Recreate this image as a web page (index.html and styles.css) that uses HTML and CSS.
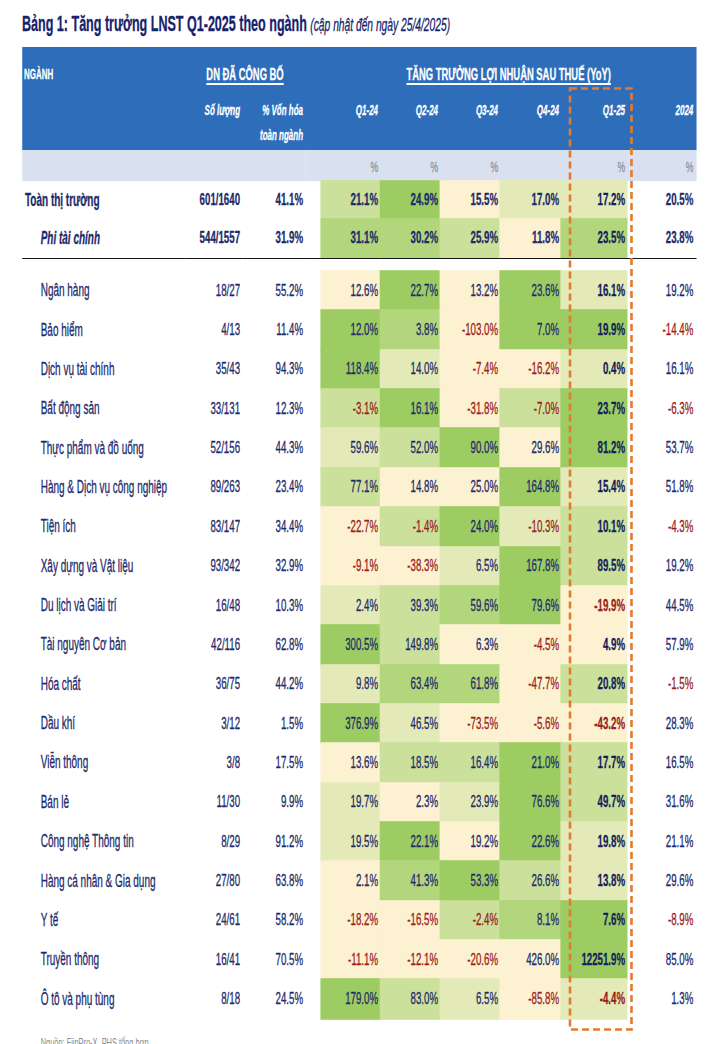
FILE: index.html
```html
<!DOCTYPE html>
<html lang="vi">
<head>
<meta charset="utf-8">
<title>Bảng 1: Tăng trưởng LNST Q1-2025 theo ngành</title>
<link rel="stylesheet" href="styles.css">
</head>
<body>
<div class="page">
  <div class="sheet">
    <h1 class="title">Bảng 1: Tăng trưởng LNST Q1-2025 theo ngành <span class="note">(cập nhật đến ngày 25/4/2025)</span></h1>
    <table class="growth">
      <colgroup>
        <col class="c-sector"><col class="c-count"><col class="c-cap"><col class="c-spacer">
        <col class="c-q"><col class="c-q2"><col class="c-q2"><col class="c-q4"><col class="c-q125"><col class="c-year">
      </colgroup>
      <thead>
        <tr class="r1">
          <th class="sector">NGÀNH</th>
          <th colspan="2" class="group"><span>DN ĐÃ CÔNG BỐ</span></th>
          <th></th>
          <th colspan="6" class="group"><span>TĂNG TRƯỞNG LỢI NHUẬN SAU THUẾ (YoY)</span></th>
        </tr>
        <tr class="r2">
          <th></th>
          <th>Số lượng</th>
          <th>% Vốn hóa<br>toàn ngành</th>
          <th></th>
          <th>Q1-24</th><th>Q2-24</th><th>Q3-24</th><th>Q4-24</th><th>Q1-25</th><th class="yr">2024</th>
        </tr>
        <tr class="r3">
          <th></th><th></th><th class="sep"></th><th></th>
          <th>%</th><th>%</th><th>%</th><th></th><th>%</th><th class="yr">%</th>
        </tr>
      </thead>
      <tbody>
        <tr class="total">
          <td class="label">Toàn thị trường</td><td class="num">601/1640</td><td class="num">41.1%</td><td></td>
          <td class="num g3">21.1%</td><td class="num g5">24.9%</td><td class="num g1">15.5%</td><td class="num g2">17.0%</td><td class="num q g2">17.2%</td><td class="num yr">20.5%</td>
        </tr>
        <tr class="nonfin">
          <td class="label">Phi tài chính</td><td class="num">544/1557</td><td class="num">31.9%</td><td></td>
          <td class="num g4">31.1%</td><td class="num g4">30.2%</td><td class="num g3">25.9%</td><td class="num g1">11.8%</td><td class="num q g4">23.5%</td><td class="num yr">23.8%</td>
        </tr>
        <tr class="gap"><td colspan="10"></td></tr>
        <tr class="row">
          <td class="label">Ngân hàng</td><td class="num">18/27</td><td class="num">55.2%</td><td></td>
          <td class="num g1">12.6%</td><td class="num g5">22.7%</td><td class="num g1">13.2%</td><td class="num g5">23.6%</td><td class="num q g2">16.1%</td><td class="num yr">19.2%</td>
        </tr>
        <tr class="row">
          <td class="label">Bảo hiểm</td><td class="num">4/13</td><td class="num">11.4%</td><td></td>
          <td class="num g5">12.0%</td><td class="num g4">3.8%</td><td class="num g1 neg">-103.0%</td><td class="num g5">7.0%</td><td class="num q g5">19.9%</td><td class="num yr neg">-14.4%</td>
        </tr>
        <tr class="row">
          <td class="label">Dịch vụ tài chính</td><td class="num">35/43</td><td class="num">94.3%</td><td></td>
          <td class="num g5">118.4%</td><td class="num g2">14.0%</td><td class="num g1 neg">-7.4%</td><td class="num g1 neg">-16.2%</td><td class="num q g2">0.4%</td><td class="num yr">16.1%</td>
        </tr>
        <tr class="row">
          <td class="label">Bất động sản</td><td class="num">33/131</td><td class="num">12.3%</td><td></td>
          <td class="num g3 neg">-3.1%</td><td class="num g5">16.1%</td><td class="num g1 neg">-31.8%</td><td class="num g3 neg">-7.0%</td><td class="num q g5">23.7%</td><td class="num yr neg">-6.3%</td>
        </tr>
        <tr class="row">
          <td class="label">Thực phẩm và đồ uống</td><td class="num">52/156</td><td class="num">44.3%</td><td></td>
          <td class="num g2">59.6%</td><td class="num g3">52.0%</td><td class="num g5">90.0%</td><td class="num g1">29.6%</td><td class="num q g5">81.2%</td><td class="num yr">53.7%</td>
        </tr>
        <tr class="row">
          <td class="label">Hàng &amp; Dịch vụ công nghiệp</td><td class="num">89/263</td><td class="num">23.4%</td><td></td>
          <td class="num g3">77.1%</td><td class="num g1">14.8%</td><td class="num g1">25.0%</td><td class="num g5">164.8%</td><td class="num q g2">15.4%</td><td class="num yr">51.8%</td>
        </tr>
        <tr class="row">
          <td class="label">Tiện ích</td><td class="num">83/147</td><td class="num">34.4%</td><td></td>
          <td class="num g1 neg">-22.7%</td><td class="num g3 neg">-1.4%</td><td class="num g5">24.0%</td><td class="num g2 neg">-10.3%</td><td class="num q g3">10.1%</td><td class="num yr neg">-4.3%</td>
        </tr>
        <tr class="row">
          <td class="label">Xây dựng và Vật liệu</td><td class="num">93/342</td><td class="num">32.9%</td><td></td>
          <td class="num g1 neg">-9.1%</td><td class="num g1 neg">-38.3%</td><td class="num g2">6.5%</td><td class="num g5">167.8%</td><td class="num q g3">89.5%</td><td class="num yr">19.2%</td>
        </tr>
        <tr class="row">
          <td class="label">Du lịch và Giải trí</td><td class="num">16/48</td><td class="num">10.3%</td><td></td>
          <td class="num g2">2.4%</td><td class="num g3">39.3%</td><td class="num g4">59.6%</td><td class="num g5">79.6%</td><td class="num q g1 neg">-19.9%</td><td class="num yr">44.5%</td>
        </tr>
        <tr class="row">
          <td class="label">Tài nguyên Cơ bản</td><td class="num">42/116</td><td class="num">62.8%</td><td></td>
          <td class="num g5">300.5%</td><td class="num g3">149.8%</td><td class="num g1">6.3%</td><td class="num g1 neg">-4.5%</td><td class="num q g1">4.9%</td><td class="num yr">57.9%</td>
        </tr>
        <tr class="row">
          <td class="label">Hóa chất</td><td class="num">36/75</td><td class="num">44.2%</td><td></td>
          <td class="num g2">9.8%</td><td class="num g4">63.4%</td><td class="num g4">61.8%</td><td class="num g1 neg">-47.7%</td><td class="num q g3">20.8%</td><td class="num yr neg">-1.5%</td>
        </tr>
        <tr class="row">
          <td class="label">Dầu khí</td><td class="num">3/12</td><td class="num">1.5%</td><td></td>
          <td class="num g5">376.9%</td><td class="num g2">46.5%</td><td class="num g1 neg">-73.5%</td><td class="num g1 neg">-5.6%</td><td class="num q g1 neg">-43.2%</td><td class="num yr">28.3%</td>
        </tr>
        <tr class="row">
          <td class="label">Viễn thông</td><td class="num">3/8</td><td class="num">17.5%</td><td></td>
          <td class="num g1">13.6%</td><td class="num g3">18.5%</td><td class="num g3">16.4%</td><td class="num g5">21.0%</td><td class="num q g3">17.7%</td><td class="num yr">16.5%</td>
        </tr>
        <tr class="row">
          <td class="label">Bán lẻ</td><td class="num">11/30</td><td class="num">9.9%</td><td></td>
          <td class="num g2">19.7%</td><td class="num g1">2.3%</td><td class="num g2">23.9%</td><td class="num g5">76.6%</td><td class="num q g3">49.7%</td><td class="num yr">31.6%</td>
        </tr>
        <tr class="row">
          <td class="label">Công nghệ Thông tin</td><td class="num">8/29</td><td class="num">91.2%</td><td></td>
          <td class="num g2">19.5%</td><td class="num g5">22.1%</td><td class="num g1">19.2%</td><td class="num g5">22.6%</td><td class="num q g2">19.8%</td><td class="num yr">21.1%</td>
        </tr>
        <tr class="row">
          <td class="label">Hàng cá nhân &amp; Gia dụng</td><td class="num">27/80</td><td class="num">63.8%</td><td></td>
          <td class="num g1">2.1%</td><td class="num g4">41.3%</td><td class="num g5">53.3%</td><td class="num g3">26.6%</td><td class="num q g2">13.8%</td><td class="num yr">29.6%</td>
        </tr>
        <tr class="row">
          <td class="label">Y tế</td><td class="num">24/61</td><td class="num">58.2%</td><td></td>
          <td class="num g1 neg">-18.2%</td><td class="num g1 neg">-16.5%</td><td class="num g3 neg">-2.4%</td><td class="num g4">8.1%</td><td class="num q g5">7.6%</td><td class="num yr neg">-8.9%</td>
        </tr>
        <tr class="row">
          <td class="label">Truyền thông</td><td class="num">16/41</td><td class="num">70.5%</td><td></td>
          <td class="num g1 neg">-11.1%</td><td class="num g1 neg">-12.1%</td><td class="num g1 neg">-20.6%</td><td class="num g1">426.0%</td><td class="num q g5">12251.9%</td><td class="num yr">85.0%</td>
        </tr>
        <tr class="row">
          <td class="label">Ô tô và phụ tùng</td><td class="num">8/18</td><td class="num">24.5%</td><td></td>
          <td class="num g5">179.0%</td><td class="num g3">83.0%</td><td class="num g2">6.5%</td><td class="num g1 neg">-85.8%</td><td class="num q g2 neg">-4.4%</td><td class="num yr">1.3%</td>
        </tr>
      </tbody>
    </table>
    <p class="source">Nguồn: FiinPro-X, PHS tổng hợp</p>
  </div>
  <svg class="focus" width="68" height="948" viewBox="0 0 68 948" aria-hidden="true">
    <rect x="3" y="3.5" width="61.5" height="941" fill="none" stroke="#e27b2f" stroke-width="2.6" stroke-dasharray="7 4"/>
  </svg>
</div>
</body>
</html>
```

FILE: styles.css
```css
html, body {
  margin: 0;
  padding: 0;
  background: #ffffff;
}

.page {
  position: relative;
  width: 720px;
  height: 1044px;
  overflow: hidden;
}

/* The source image is a horizontally condensed render; lay out at full width and squeeze. */
.sheet {
  width: 1263px;
  box-sizing: border-box;
  padding: 11px 0 0 38.6px;
  transform: scaleX(0.57);
  transform-origin: 0 0;
  font-family: "Liberation Sans", Arial, sans-serif;
  color: #1d2a6b;
  -webkit-text-stroke: 0.3px currentColor;
}

.title {
  margin: 0 0 9px;
  font-size: 22px;
  line-height: 26px;
  font-weight: 700;
  color: #17226b;
  white-space: nowrap;
}

.title .note {
  font-size: 18px;
  font-weight: 400;
  font-style: italic;
}

/* header band colours are painted once on the table so no seams show between header cells */
.growth {
  border-collapse: collapse;
  border-spacing: 0;
  table-layout: fixed;
  width: 1182.6px;
  background:
    linear-gradient(#2e6db9, #2e6db9) 0 0 / 100% 103px no-repeat,
    linear-gradient(#d9e0f0, #d9e0f0) 0 103px / 100% 31px no-repeat;
}

.c-sector { width: 286px; }
.c-count { width: 100px; }
.c-cap { width: 110.5px; }
.c-spacer { width: 28.1px; }
.c-q { width: 103.5px; }
.c-q2 { width: 105.3px; }
.c-q4 { width: 107px; }
.c-q125 { width: 115.8px; }
.c-year { width: 121.4px; }

.growth th,
.growth td {
  padding: 0 3.5px;
  white-space: nowrap;
  overflow: visible;
}

.growth thead th {
  color: #ffffff;
  font-weight: 700;
}

.r1 { height: 48px; }
.r1 th {
  vertical-align: top;
  padding-top: 17px;
  line-height: 20px;
  font-size: 16.5px;
}
.r1 .sector {
  text-align: left;
  font-size: 14px;
}
.r1 .group { text-align: center; }
.r1 .group span {
  text-decoration: underline;
  text-decoration-thickness: 1.5px;
  text-underline-offset: 3px;
}

.r2 { height: 55px; }
.r2 th {
  vertical-align: top;
  padding-top: 3px;
  line-height: 25px;
  font-size: 14px;
  font-style: italic;
  text-align: right;
}

.r3 { height: 31px; }
.growth .r3 th {
  color: #8c919c;
  font-weight: 400;
  font-size: 15px;
  line-height: 18px;
  padding-top: 8px;
  vertical-align: top;
  text-align: right;
}
.growth .r3 th.sep { border-right: 1.5px solid #e6ebf6; }

.growth .yr { padding-right: 5.3px; }

.total { height: 38px; }
.nonfin { height: 39px; }
.nonfin td { border-bottom: 1.6px solid #151515; }
.gap { height: 13px; }
.row { height: 39.37px; }

.growth td { vertical-align: middle; }

.label {
  text-align: left;
  font-size: 17.5px;
}
.growth td.label { padding-left: 32.8px; }
.growth .total td.label { padding-left: 5.3px; }
.total td,
.nonfin td { font-weight: 700; }
.nonfin td.label { font-style: italic; }

.num {
  text-align: right;
  font-size: 17px;
}
.num.q {
  font-weight: 700;
  color: #131e5c;
}

.neg,
.num.q.neg { color: #9b1c1c; }

/* heat-map fills; the matching shadow closes anti-aliased seams between cells */
.g1 { background: #fcf1d1; box-shadow: 0 0 0 0.8px #fcf1d1; }
.g2 { background: #e4eab7; box-shadow: 0 0 0 0.8px #e4eab7; }
.g3 { background: #cbe09a; box-shadow: 0 0 0 0.8px #cbe09a; }
.g4 { background: #b2d67b; box-shadow: 0 0 0 0.8px #b2d67b; }
.g5 { background: #9dcd62; box-shadow: 0 0 0 0.8px #9dcd62; }

.source {
  margin: 16px 0 0 32.8px;
  font-size: 13px;
  line-height: 16px;
  color: #8a8a8a;
  white-space: nowrap;
  -webkit-text-stroke: 0;
}

.focus {
  position: absolute;
  left: 567px;
  top: 85px;
}
```
